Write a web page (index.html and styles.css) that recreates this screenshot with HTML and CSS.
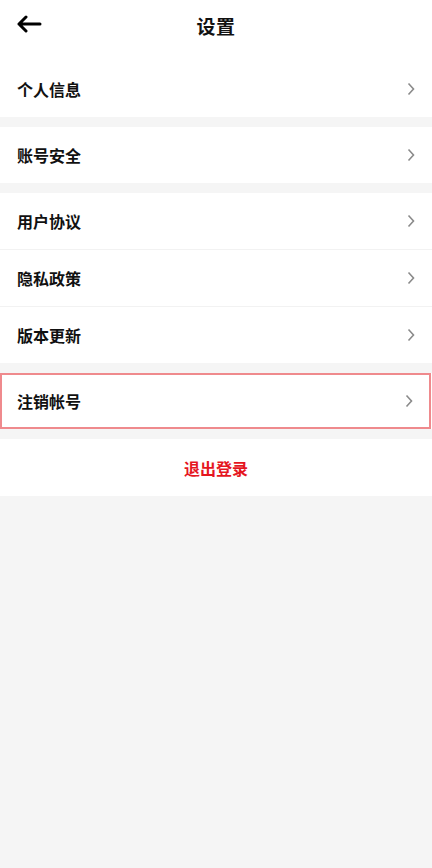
FILE: index.html
```html
<!DOCTYPE html>
<html lang="zh">
<head>
<meta charset="utf-8">
<link rel="stylesheet" href="styles.css">
</head>
<body>
<div class="page">
  <header class="topbar">
    <svg class="back" width="26" height="18" viewBox="0 0 26 18"><path d="M24 9H3M10 2L3 9l7 7" fill="none" stroke="#000" stroke-width="3" stroke-linecap="round" stroke-linejoin="round"/></svg>
    <h1 class="title">设置</h1>
    <span class="spacer"></span>
  </header>
  <section class="group">
    <div class="row"><span>个人信息</span><svg class="chev" width="8" height="14" viewBox="0 0 8 14"><path d="M1.5 1.5L6.5 7l-5 5.5" fill="none" stroke="#8a8a8a" stroke-width="1.6"/></svg></div>
  </section>
  <section class="group">
    <div class="row"><span>账号安全</span><svg class="chev" width="8" height="14" viewBox="0 0 8 14"><path d="M1.5 1.5L6.5 7l-5 5.5" fill="none" stroke="#8a8a8a" stroke-width="1.6"/></svg></div>
  </section>
  <section class="group">
    <div class="row line"><span>用户协议</span><svg class="chev" width="8" height="14" viewBox="0 0 8 14"><path d="M1.5 1.5L6.5 7l-5 5.5" fill="none" stroke="#8a8a8a" stroke-width="1.6"/></svg></div>
    <div class="row line"><span>隐私政策</span><svg class="chev" width="8" height="14" viewBox="0 0 8 14"><path d="M1.5 1.5L6.5 7l-5 5.5" fill="none" stroke="#8a8a8a" stroke-width="1.6"/></svg></div>
    <div class="row"><span>版本更新</span><svg class="chev" width="8" height="14" viewBox="0 0 8 14"><path d="M1.5 1.5L6.5 7l-5 5.5" fill="none" stroke="#8a8a8a" stroke-width="1.6"/></svg></div>
  </section>
  <section class="group">
    <div class="row marked"><span>注销帐号</span><svg class="chev" width="8" height="14" viewBox="0 0 8 14"><path d="M1.5 1.5L6.5 7l-5 5.5" fill="none" stroke="#8a8a8a" stroke-width="1.6"/></svg></div>
  </section>
  <section class="group">
    <div class="logout">退出登录</div>
  </section>
</div>
</body>
</html>
```
FILE: styles.css
```css
html, body {
  margin: 0;
  padding: 0;
  background: #f5f5f5;
}
body {
  font-family: "Noto Sans CJK SC", "Noto Sans", sans-serif;
  color: #111;
}
.page {
  width: 432px;
  min-height: 868px;
  display: flex;
  flex-direction: column;
  gap: 10px;
}
.topbar {
  height: 61px;
  background: #fff;
  display: grid;
  grid-template-columns: 1fr auto 1fr;
  align-items: start;
  padding: 0 16px;
  box-sizing: border-box;
  margin-bottom: -10px;
}
.back {
  margin-top: 15px;
}
.title {
  margin: 13px 0 0 0;
  font-size: 19px;
  line-height: 26px;
  font-weight: 700;
  letter-spacing: 0.5px;
}
.group {
  background: #fff;
  display: flex;
  flex-direction: column;
}
.row {
  height: 56px;
  padding: 0 17px 0 17px;
  display: flex;
  align-items: center;
  justify-content: space-between;
  font-size: 16px;
  font-weight: 700;
  box-sizing: border-box;
}
.row.line {
  border-bottom: 1px solid #f2f2f2;
  height: 57px;
}
.row.marked {
  border: 2px solid #ef8a8d;
  height: 56px;
  padding: 0 16px 0 15px;
  margin: 0 1px 0 0;
}
.logout {
  height: 57px;
  display: flex;
  align-items: center;
  justify-content: center;
  color: #e5161f;
  font-size: 16px;
  font-weight: 700;
}
```
